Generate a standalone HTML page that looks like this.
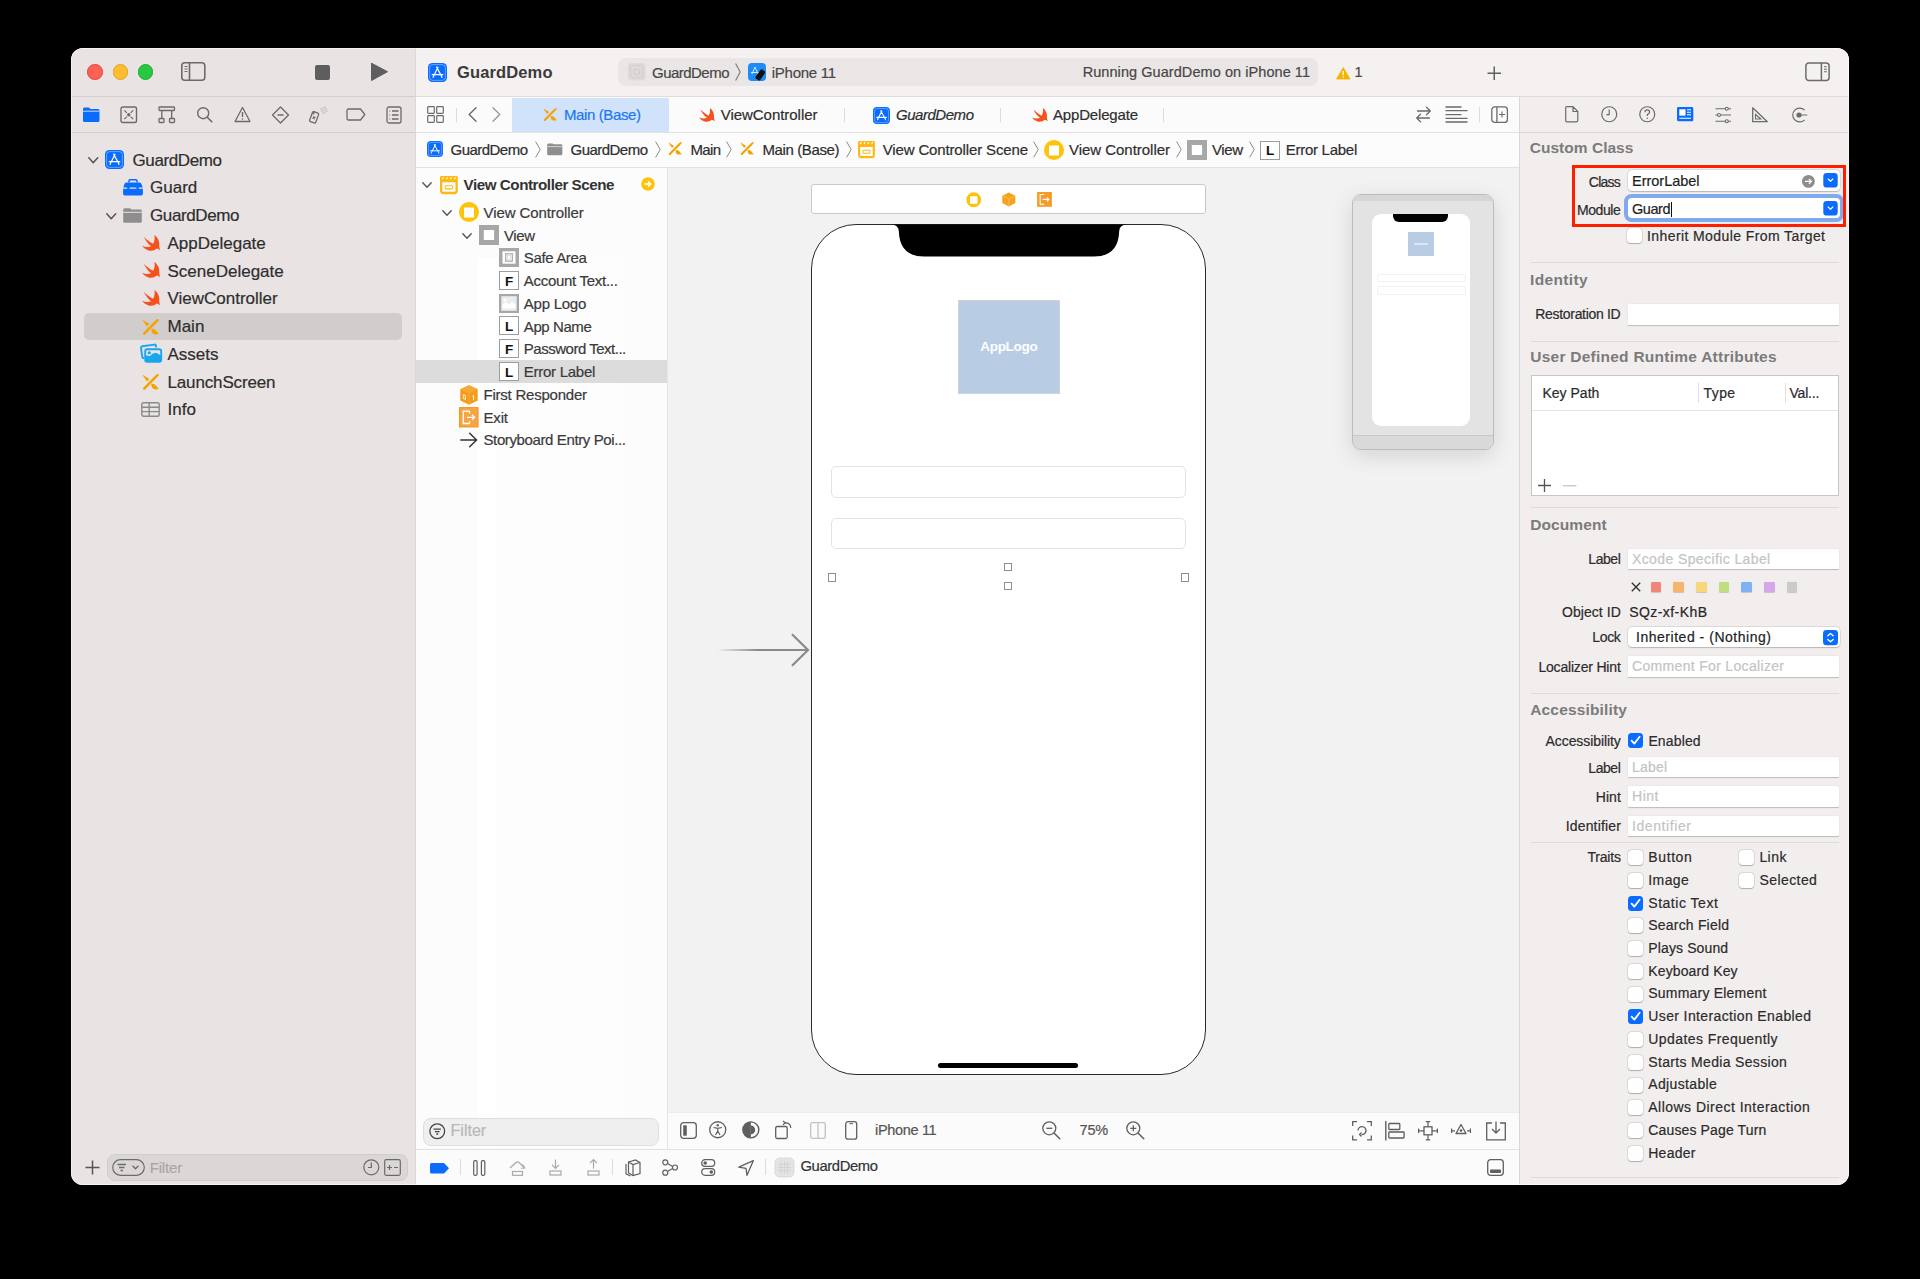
<!DOCTYPE html>
<html><head><meta charset="utf-8">
<style>
*{box-sizing:border-box;margin:0;padding:0}
html,body{width:1920px;height:1279px;background:#000;overflow:hidden;font-family:"Liberation Sans",sans-serif;color:#262626}
#win{position:absolute;left:0;top:0;width:1920px;height:1279px;clip-path:inset(48px 71px 94px 71px round 12px);background:#fbfbfb;}
.a{position:absolute}
.t{position:absolute;white-space:nowrap;line-height:1;-webkit-text-stroke:0.2px currentColor}
svg{position:absolute;overflow:visible}
</style></head><body>
<div id="win">
<!-- sec_sidebar -->
<div class="a" style="left:71px;top:48px;width:345px;height:1137px;background:#e9e3e3;"></div>
<div class="a" style="left:415px;top:48px;width:1px;height:1137px;background:#ddd8d8;"></div>
<div class="a" style="left:71px;top:96px;width:344px;height:1px;background:#d4cfcf;"></div>
<div class="a" style="left:71px;top:132px;width:344px;height:1px;background:#d4cfcf;"></div>
<div class="a" style="left:87.3px;top:64.3px;width:15.5px;height:15.5px;background:#fe5f57;border-radius:50%;border:0.5px solid #e2463f"></div>
<div class="a" style="left:112.5px;top:64.3px;width:15.5px;height:15.5px;background:#febc2e;border-radius:50%;border:0.5px solid #e1a325"></div>
<div class="a" style="left:137.7px;top:64.3px;width:15.5px;height:15.5px;background:#28c840;border-radius:50%;border:0.5px solid #1dad2b"></div>
<svg style="left:180px;top:61px" width="27" height="22" viewBox="0 0 27 22"><rect x="1.8" y="1.8" width="23" height="17.5" rx="3" fill="none" stroke="#6b6b6b" stroke-width="1.6"/><line x1="9.5" y1="2" x2="9.5" y2="19" stroke="#6b6b6b" stroke-width="1.6"/><path d="M4.5 5.5h3M4.5 8h3M4.5 10.5h3" stroke="#6b6b6b" stroke-width="1.2"/></svg>
<div class="a" style="left:314.5px;top:65px;width:15px;height:15px;background:#5e5e5e;border-radius:2px"></div>
<svg style="left:370px;top:62px" width="20" height="20" viewBox="0 0 20 20"><path d="M1.5 1.2 L17.5 9.7 L1.5 18.5 Z" fill="#5e5e5e" stroke="#5e5e5e" stroke-width="1" stroke-linejoin="round"/></svg>
<svg style="left:82px;top:106px" width="19" height="17" viewBox="0 0 19 17"><path d="M1 3 Q1 1.5 2.5 1.5 H7 L8.5 3 H16 Q17.5 3 17.5 4.5 V14.5 Q17.5 16 16 16 H2.5 Q1 16 1 14.5 Z" fill="#0a6cff"/><line x1="1" y1="5.2" x2="17.5" y2="5.2" stroke="#e8e3e3" stroke-width="0.9"/></svg>
<svg style="left:120px;top:106px" width="18" height="18" viewBox="0 0 18 18"><rect x="1" y="1" width="15.5" height="15.5" rx="1.8" fill="none" stroke="#6b6b6b" stroke-width="1.4"/><path d="M4.3 4.3 L6.9 6.9 M13.2 4.3 L10.6 6.9 M4.3 13.2 L6.9 10.6 M13.2 13.2 L10.6 10.6" stroke="#6b6b6b" stroke-width="1.2"/><circle cx="8.75" cy="8.75" r="1.7" fill="#6b6b6b"/></svg>
<svg style="left:158px;top:106px" width="18" height="18" viewBox="0 0 18 18"><rect x="1" y="1" width="15.5" height="3.5" rx="0.8" fill="none" stroke="#6b6b6b" stroke-width="1.3"/><path d="M3.8 4.5 V12.5 M13.7 4.5 V12.5" stroke="#6b6b6b" stroke-width="1.3"/><rect x="1" y="12.5" width="5" height="4" rx="0.8" fill="none" stroke="#6b6b6b" stroke-width="1.3"/><rect x="11.5" y="12.5" width="5" height="4" rx="0.8" fill="none" stroke="#6b6b6b" stroke-width="1.3"/></svg>
<svg style="left:196px;top:106px" width="18" height="18" viewBox="0 0 18 18"><circle cx="7.2" cy="7.2" r="5.5" fill="none" stroke="#6b6b6b" stroke-width="1.4"/><line x1="11.2" y1="11.2" x2="15.8" y2="15.8" stroke="#6b6b6b" stroke-width="1.6" stroke-linecap="round"/></svg>
<svg style="left:234px;top:106px" width="18" height="18" viewBox="0 0 18 18"><path d="M8.5 1.5 L16 15.5 H1 Z" fill="none" stroke="#6b6b6b" stroke-width="1.3" stroke-linejoin="round"/><path d="M8.5 6 V11" stroke="#6b6b6b" stroke-width="1.4"/><circle cx="8.5" cy="13" r="0.8" fill="#6b6b6b"/></svg>
<svg style="left:271px;top:106px" width="19" height="18" viewBox="0 0 19 18"><path d="M9.5 1 L17.5 9 L9.5 17 L1.5 9 Z" fill="none" stroke="#6b6b6b" stroke-width="1.3" stroke-linejoin="round"/><line x1="6.5" y1="9" x2="12.5" y2="9" stroke="#6b6b6b" stroke-width="1.3"/></svg>
<svg style="left:309px;top:105px" width="20" height="19" viewBox="0 0 20 19"><rect x="2" y="7" width="6.5" height="10.5" rx="1.2" transform="rotate(20 5 12)" fill="none" stroke="#6b6b6b" stroke-width="1.3"/><path d="M4.5 9.5 L5 7" stroke="#6b6b6b" stroke-width="1.3"/><path d="M4 11.5 l2.5 2.5 m0 -2.5 l-2.5 2.5" stroke="#6b6b6b" stroke-width="1" transform="rotate(20 5 12)"/><g fill="#8a8a8a"><circle cx="12" cy="4" r="0.6"/><circle cx="14" cy="3" r="0.6"/><circle cx="16" cy="2" r="0.6"/><circle cx="13" cy="6" r="0.6"/><circle cx="15" cy="5" r="0.6"/><circle cx="17" cy="4" r="0.6"/><circle cx="14" cy="8" r="0.6"/><circle cx="16" cy="7" r="0.6"/><circle cx="18" cy="6" r="0.6"/></g></svg>
<svg style="left:346px;top:108px" width="20" height="13" viewBox="0 0 20 13"><path d="M2.5 1 H14.5 L18.8 6.5 L14.5 12 H2.5 Q1 12 1 10.5 V2.5 Q1 1 2.5 1 Z" fill="none" stroke="#6b6b6b" stroke-width="1.3" stroke-linejoin="round"/></svg>
<svg style="left:386px;top:106px" width="16" height="18" viewBox="0 0 16 18"><rect x="1" y="1" width="14" height="16" rx="2" fill="none" stroke="#6b6b6b" stroke-width="1.3"/><path d="M6 5 H12.5 M6 9 H12.5 M6 13 H12.5" stroke="#6b6b6b" stroke-width="1.3"/><path d="M3.3 5 H4.3 M3.3 9 H4.3 M3.3 13 H4.3" stroke="#6b6b6b" stroke-width="1"/></svg>
<div class="a" style="left:84px;top:313px;width:318px;height:27px;background:#d2cdcd;border-radius:5px"></div>
<svg style="left:88.4px;top:157px" width="10.5" height="6.5" viewBox="0 0 10.5 6.5"><path d="M0.8 0.8 L5.25 5.7 L9.7 0.8" fill="none" stroke="#555" stroke-width="1.5" stroke-linecap="round" stroke-linejoin="round"/></svg>
<svg style="left:105.3px;top:149.7px" width="19" height="19" viewBox="0 0 19 19"><rect x="0" y="0" width="19" height="19" rx="4.5" fill="#0a6cff"/><rect x="1.6" y="1.6" width="15.8" height="15.8" rx="3.2" fill="none" stroke="#8fbcff" stroke-width="0.7"/><path d="M10 4.3 L5.4 13.4 M9.4 5.6 L13.7 13.4 M4.2 11.6 H14.9 M8.6 4.1 L9.4 5.6" stroke="#fff" stroke-width="1.15" stroke-linecap="round" fill="none"/><circle cx="5.2" cy="14.2" r="0.7" fill="#fff"/><circle cx="13.9" cy="14.2" r="0.7" fill="#fff"/></svg>
<div class="t" style="left:132.50px;top:151.71px;font-size:17px;color:#2e2e2e;letter-spacing:-0.387px;">GuardDemo</div>
<svg style="left:122.8px;top:179px" width="20" height="17" viewBox="0 0 20 17"><path d="M6 3.5 V1.8 Q6 0.8 7 0.8 H13 Q14 0.8 14 1.8 V3.5" fill="none" stroke="#0a6cff" stroke-width="1.5"/><path d="M1.3 5.5 Q1.8 3.4 3.5 3.4 H16.5 Q18.2 3.4 18.7 5.5 L19.7 8.6 H0.3 Z" fill="#0a6cff"/><path d="M0.1 9.8 H19.9 V14.8 Q19.9 16.6 18.1 16.6 H1.9 Q0.1 16.6 0.1 14.8 Z" fill="#0a6cff"/><rect x="4.2" y="7.6" width="2.4" height="3" rx="0.6" fill="#0a6cff"/><rect x="13.4" y="7.6" width="2.4" height="3" rx="0.6" fill="#0a6cff"/></svg>
<div class="t" style="left:150.00px;top:179.46px;font-size:17px;color:#2e2e2e;">Guard</div>
<svg style="left:106px;top:212.5px" width="10.5" height="6.5" viewBox="0 0 10.5 6.5"><path d="M0.8 0.8 L5.25 5.7 L9.7 0.8" fill="none" stroke="#555" stroke-width="1.5" stroke-linecap="round" stroke-linejoin="round"/></svg>
<svg style="left:123px;top:208px" width="19" height="15" viewBox="0 0 19 15"><path d="M0.2 2 Q0.2 0.3 1.8 0.3 H6.8 L8.3 1.4 H17.4 Q18.8 1.4 18.8 2.8 V13.4 Q18.8 14.8 17.4 14.8 H1.6 Q0.2 14.8 0.2 13.4 Z" fill="#8e8e8e"/><line x1="0.2" y1="4.3" x2="18.8" y2="4.3" stroke="#e8e3e3" stroke-width="1"/></svg>
<div class="t" style="left:150.00px;top:207.21px;font-size:17px;color:#2e2e2e;letter-spacing:-0.387px;">GuardDemo</div>
<svg style="left:141.7px;top:234.65px" width="18.0" height="17.0" viewBox="0 0 18 17"><path d="M12.5 0C16 2.5 17.8 6.5 17.2 11L17.9 15.4C16.8 14.2 15.6 13.6 14.6 13.5C12.5 15.6 9.5 16.2 6.5 15.4C3.8 14.6 1.5 12.8 0 10.8C2.8 12.2 6.2 12.4 9.2 11.3C6.2 9 3.5 5.5 1.7 1.7C4.6 4.6 8 7.4 11.2 8.8C12.6 6 13 3 12.5 0Z" fill="#f6511d"/></svg>
<div class="t" style="left:167.50px;top:234.96px;font-size:17px;color:#2e2e2e;">AppDelegate</div>
<svg style="left:141.7px;top:262.40000000000003px" width="18.0" height="17.0" viewBox="0 0 18 17"><path d="M12.5 0C16 2.5 17.8 6.5 17.2 11L17.9 15.4C16.8 14.2 15.6 13.6 14.6 13.5C12.5 15.6 9.5 16.2 6.5 15.4C3.8 14.6 1.5 12.8 0 10.8C2.8 12.2 6.2 12.4 9.2 11.3C6.2 9 3.5 5.5 1.7 1.7C4.6 4.6 8 7.4 11.2 8.8C12.6 6 13 3 12.5 0Z" fill="#f6511d"/></svg>
<div class="t" style="left:167.50px;top:262.71px;font-size:17px;color:#2e2e2e;">SceneDelegate</div>
<svg style="left:141.7px;top:290.15000000000003px" width="18.0" height="17.0" viewBox="0 0 18 17"><path d="M12.5 0C16 2.5 17.8 6.5 17.2 11L17.9 15.4C16.8 14.2 15.6 13.6 14.6 13.5C12.5 15.6 9.5 16.2 6.5 15.4C3.8 14.6 1.5 12.8 0 10.8C2.8 12.2 6.2 12.4 9.2 11.3C6.2 9 3.5 5.5 1.7 1.7C4.6 4.6 8 7.4 11.2 8.8C12.6 6 13 3 12.5 0Z" fill="#f6511d"/></svg>
<div class="t" style="left:167.50px;top:290.46px;font-size:17px;color:#2e2e2e;">ViewController</div>
<svg style="left:142px;top:318.6px" width="17.0" height="16.0" viewBox="0 0 17 16"><path d="M2.2 14.6 L14.2 2.4" stroke="#f5a300" stroke-width="2.6" stroke-linecap="round"/><circle cx="15.6" cy="1.3" r="1.2" fill="#f5a300"/><path d="M0.2 0.4 L7.4 4.9 L4.9 7.4 Z" fill="#f5a300"/><path d="M9.2 10.0 Q11.6 9.3 13.4 10.9 Q14.8 12.4 16.8 14.8 Q13.6 16.0 11.2 14.8 Q9.2 13.6 9.2 10.0Z" fill="#f5a300"/></svg>
<div class="t" style="left:167.50px;top:318.21px;font-size:17px;color:#2e2e2e;">Main</div>
<svg style="left:139.7px;top:344.35px" width="22" height="19" viewBox="0 0 22 19"><path d="M16 3.5 V1.8 Q15.8 0.4 14.4 0.6 L2.2 2.2 Q0.8 2.5 1 3.9 L2.3 13 Q2.5 14.3 4 14.2" fill="none" stroke="#18a6f0" stroke-width="1.9"/><rect x="5.2" y="5.3" width="16" height="12.4" rx="2" fill="none" stroke="#18a6f0" stroke-width="1.9"/><path d="M5.2 15 L5.2 12.5 Q7.3 10.8 9.6 12.2 Q12.5 9.2 15.8 8.8 Q18.6 9.6 21.2 11.7 V15.5 Q21.2 17.7 19.2 17.7 H7.2 Q5.2 17.7 5.2 15.5Z" fill="#18a6f0"/><ellipse cx="9.3" cy="8.7" rx="1.7" ry="1.5" fill="#18a6f0"/></svg>
<div class="t" style="left:167.50px;top:345.96px;font-size:17px;color:#2e2e2e;">Assets</div>
<svg style="left:142px;top:374.1px" width="17.0" height="16.0" viewBox="0 0 17 16"><path d="M2.2 14.6 L14.2 2.4" stroke="#f5a300" stroke-width="2.6" stroke-linecap="round"/><circle cx="15.6" cy="1.3" r="1.2" fill="#f5a300"/><path d="M0.2 0.4 L7.4 4.9 L4.9 7.4 Z" fill="#f5a300"/><path d="M9.2 10.0 Q11.6 9.3 13.4 10.9 Q14.8 12.4 16.8 14.8 Q13.6 16.0 11.2 14.8 Q9.2 13.6 9.2 10.0Z" fill="#f5a300"/></svg>
<div class="t" style="left:167.50px;top:373.71px;font-size:17px;color:#2e2e2e;letter-spacing:-0.149px;">LaunchScreen</div>
<svg style="left:140.5px;top:401.85px" width="19" height="15" viewBox="0 0 19 15"><rect x="0.8" y="0.8" width="17.4" height="13.4" rx="1.8" fill="none" stroke="#8a8a8a" stroke-width="1.4"/><path d="M0.8 5.2 H18.2 M0.8 9.6 H18.2 M8.2 0.8 V14.2" stroke="#8a8a8a" stroke-width="1.4"/></svg>
<div class="t" style="left:167.50px;top:401.46px;font-size:17px;color:#2e2e2e;">Info</div>
<svg style="left:85px;top:1160px" width="15" height="15" viewBox="0 0 15 15"><path d="M7.5 0.5 V14.5 M0.5 7.5 H14.5" stroke="#555" stroke-width="1.5"/></svg>
<div class="a" style="left:106.5px;top:1153.5px;width:301.5px;height:27.5px;background:#dcd7d7;border-radius:8px;border:1px solid #d2cdcd"></div>
<svg style="left:112px;top:1159px" width="33" height="17" viewBox="0 0 33 17"><rect x="0.7" y="0.7" width="31.6" height="15.6" rx="7.8" fill="none" stroke="#6b6b6b" stroke-width="1.2"/><path d="M5.5 5.5 H14 M7 8.5 H12.5 M8.5 11.5 H11" stroke="#6b6b6b" stroke-width="1.3"/><path d="M20.5 6.8 L23.5 9.8 L26.5 6.8" fill="none" stroke="#6b6b6b" stroke-width="1.3"/></svg>
<div class="t" style="left:149.70px;top:1159.60px;font-size:15px;color:#aaa6a6;letter-spacing:-0.167px;">Filter</div>
<svg style="left:363px;top:1159px" width="17" height="17" viewBox="0 0 17 17"><circle cx="8.3" cy="8.3" r="7.5" fill="none" stroke="#6b6b6b" stroke-width="1.2"/><path d="M8.3 3.5 V8.5 H5" fill="none" stroke="#6b6b6b" stroke-width="1.2"/></svg>
<svg style="left:384px;top:1159px" width="17" height="17" viewBox="0 0 17 17"><rect x="0.7" y="0.7" width="15.6" height="15.6" rx="1.5" fill="none" stroke="#6b6b6b" stroke-width="1.2"/><path d="M3 8.5 H8 M5.5 6 V11 M10 8.5 H14" stroke="#6b6b6b" stroke-width="1.2"/></svg>
<!-- sec_center -->
<div class="a" style="left:416px;top:48px;width:1433px;height:48px;background:#f6f1f1;"></div>
<div class="a" style="left:416px;top:96px;width:1433px;height:1px;background:#e0dcdc;"></div>
<svg style="left:428px;top:63px" width="19" height="19" viewBox="0 0 19 19"><rect x="0" y="0" width="19" height="19" rx="4.5" fill="#0a6cff"/><rect x="1.6" y="1.6" width="15.8" height="15.8" rx="3.2" fill="none" stroke="#8fbcff" stroke-width="0.7"/><path d="M10 4.3 L5.4 13.4 M9.4 5.6 L13.7 13.4 M4.2 11.6 H14.9 M8.6 4.1 L9.4 5.6" stroke="#fff" stroke-width="1.15" stroke-linecap="round" fill="none"/><circle cx="5.2" cy="14.2" r="0.7" fill="#fff"/><circle cx="13.9" cy="14.2" r="0.7" fill="#fff"/></svg>
<div class="t" style="left:457.00px;top:64.13px;font-size:16.5px;color:#3a3a3a;font-weight:700;-webkit-text-stroke:0;letter-spacing:0.133px;">GuardDemo</div>
<div class="a" style="left:618px;top:58.3px;width:700px;height:27.5px;background:#ebe6e6;border-radius:7px"></div>
<svg style="left:627.5px;top:63px" width="17.5" height="17.5" viewBox="0 0 17.5 17.5"><rect x="0" y="0" width="17.5" height="17.5" rx="4" fill="#dedada"/><circle cx="8.75" cy="8.75" r="3" fill="none" stroke="#c9c9c9" stroke-width="0.8"/><rect x="2.5" y="2.5" width="12.5" height="12.5" rx="2.5" fill="none" stroke="#d0cccc" stroke-width="0.8"/></svg>
<div class="t" style="left:652.00px;top:64.50px;font-size:15px;color:#474747;letter-spacing:-0.526px;">GuardDemo</div>
<svg style="left:735px;top:63px" width="6" height="18" viewBox="0 0 6 18"><path d="M0.6 0.6 L5.2 9.0 L0.6 17.4" fill="none" stroke="#777" stroke-width="1.1" stroke-linejoin="round"/></svg>
<svg style="left:747.5px;top:63px" width="18" height="18" viewBox="0 0 18 18"><rect x="0" y="0" width="18" height="18" rx="4" fill="#1d8cf8"/><path d="M7 4 L4 11 M7 4 L10 11 M3 9.5 H11" stroke="#cfe6ff" stroke-width="1"/><rect x="9.6" y="6.4" width="5.5" height="11" rx="1.2" transform="rotate(35 12.3 11.9)" fill="#111"/></svg>
<div class="t" style="left:771.75px;top:64.50px;font-size:15px;color:#474747;letter-spacing:-0.268px;">iPhone 11</div>
<div class="t" style="left:1082.70px;top:64.83px;font-size:14.5px;color:#474747;letter-spacing:0.064px;">Running GuardDemo on iPhone 11</div>
<svg style="left:1336px;top:66.5px" width="14.5" height="12.5" viewBox="0 0 14.5 12.5"><path d="M7.25 0.5 L14 12 H0.5 Z" fill="#f5b400" stroke="#f5b400" stroke-width="0.8" stroke-linejoin="round"/><path d="M7.25 4 V8" stroke="#fff" stroke-width="1.4"/><circle cx="7.25" cy="10" r="0.75" fill="#fff"/></svg>
<div class="t" style="left:1354.50px;top:65.03px;font-size:14.5px;color:#474747;">1</div>
<svg style="left:1486.5px;top:65.8px" width="14.5" height="14.5" viewBox="0 0 14.5 14.5"><path d="M7.25 0.5 V14 M0.5 7.25 H14" stroke="#5f5f5f" stroke-width="1.5"/></svg>
<svg style="left:1805px;top:61.5px" width="26" height="20" viewBox="0 0 26 20"><rect x="0.9" y="0.9" width="23.2" height="17.6" rx="3" fill="none" stroke="#6b6b6b" stroke-width="1.5"/><line x1="16.4" y1="1" x2="16.4" y2="18.5" stroke="#6b6b6b" stroke-width="1.5"/><path d="M19 4.8h2.8M19 7.3h2.8M19 9.8h2.8" stroke="#6b6b6b" stroke-width="1.1"/></svg>
<div class="a" style="left:416px;top:97px;width:1103px;height:35px;background:#fbfbfb;"></div>
<div class="a" style="left:416px;top:131.5px;width:1103px;height:1px;background:#e2e2e2;"></div>
<svg style="left:427px;top:106px" width="17" height="17" viewBox="0 0 17 17"><rect x="0.7" y="0.7" width="6.6" height="6.6" rx="0.8" fill="none" stroke="#6b6b6b" stroke-width="1.2"/><rect x="9.7" y="0.7" width="6.6" height="6.6" rx="0.8" fill="none" stroke="#6b6b6b" stroke-width="1.2"/><rect x="0.7" y="9.7" width="6.6" height="6.6" rx="0.8" fill="none" stroke="#6b6b6b" stroke-width="1.2"/><rect x="9.7" y="9.7" width="6.6" height="6.6" rx="0.8" fill="none" stroke="#6b6b6b" stroke-width="1.2"/></svg>
<div class="a" style="left:455.5px;top:107.5px;width:1px;height:14px;background:#dcdcdc;"></div>
<svg style="left:467.5px;top:107px" width="9" height="15" viewBox="0 0 9 15"><path d="M8 0.8 L1.2 7.5 L8 14.2" fill="none" stroke="#6b6b6b" stroke-width="1.4" stroke-linecap="round" stroke-linejoin="round"/></svg>
<svg style="left:492px;top:107px" width="9" height="15" viewBox="0 0 9 15"><path d="M1 0.8 L7.8 7.5 L1 14.2" fill="none" stroke="#9a9a9a" stroke-width="1.4" stroke-linecap="round" stroke-linejoin="round"/></svg>
<div class="a" style="left:512px;top:97.5px;width:157px;height:34px;background:#d1e3fb;"></div>
<svg style="left:542.5px;top:107.5px" width="13.94" height="13.12" viewBox="0 0 17 16"><path d="M2.2 14.6 L14.2 2.4" stroke="#f5a300" stroke-width="2.6" stroke-linecap="round"/><circle cx="15.6" cy="1.3" r="1.2" fill="#f5a300"/><path d="M0.2 0.4 L7.4 4.9 L4.9 7.4 Z" fill="#f5a300"/><path d="M9.2 10.0 Q11.6 9.3 13.4 10.9 Q14.8 12.4 16.8 14.8 Q13.6 16.0 11.2 14.8 Q9.2 13.6 9.2 10.0Z" fill="#f5a300"/></svg>
<div class="t" style="left:564.00px;top:107.40px;font-size:15px;color:#1877f2;letter-spacing:-0.386px;">Main (Base)</div>
<svg style="left:699px;top:107.5px" width="15.66" height="14.79" viewBox="0 0 18 17"><path d="M12.5 0C16 2.5 17.8 6.5 17.2 11L17.9 15.4C16.8 14.2 15.6 13.6 14.6 13.5C12.5 15.6 9.5 16.2 6.5 15.4C3.8 14.6 1.5 12.8 0 10.8C2.8 12.2 6.2 12.4 9.2 11.3C6.2 9 3.5 5.5 1.7 1.7C4.6 4.6 8 7.4 11.2 8.8C12.6 6 13 3 12.5 0Z" fill="#f6511d"/></svg>
<div class="t" style="left:720.75px;top:107.40px;font-size:15px;color:#2e2e2e;letter-spacing:-0.040px;">ViewController</div>
<div class="a" style="left:843.5px;top:107.5px;width:1px;height:14px;background:#dcdcdc;"></div>
<svg style="left:873px;top:106.5px" width="17" height="17" viewBox="0 0 19 19"><rect x="0" y="0" width="19" height="19" rx="4.5" fill="#0a6cff"/><rect x="1.6" y="1.6" width="15.8" height="15.8" rx="3.2" fill="none" stroke="#8fbcff" stroke-width="0.7"/><path d="M10 4.3 L5.4 13.4 M9.4 5.6 L13.7 13.4 M4.2 11.6 H14.9 M8.6 4.1 L9.4 5.6" stroke="#fff" stroke-width="1.15" stroke-linecap="round" fill="none"/><circle cx="5.2" cy="14.2" r="0.7" fill="#fff"/><circle cx="13.9" cy="14.2" r="0.7" fill="#fff"/></svg>
<div class="t" style="left:896.00px;top:107.40px;font-size:15px;color:#2e2e2e;font-style:italic;letter-spacing:-0.463px;">GuardDemo</div>
<div class="a" style="left:1000px;top:107.5px;width:1px;height:14px;background:#dcdcdc;"></div>
<svg style="left:1031.5px;top:107.5px" width="15.66" height="14.79" viewBox="0 0 18 17"><path d="M12.5 0C16 2.5 17.8 6.5 17.2 11L17.9 15.4C16.8 14.2 15.6 13.6 14.6 13.5C12.5 15.6 9.5 16.2 6.5 15.4C3.8 14.6 1.5 12.8 0 10.8C2.8 12.2 6.2 12.4 9.2 11.3C6.2 9 3.5 5.5 1.7 1.7C4.6 4.6 8 7.4 11.2 8.8C12.6 6 13 3 12.5 0Z" fill="#f6511d"/></svg>
<div class="t" style="left:1053.00px;top:107.40px;font-size:15px;color:#2e2e2e;letter-spacing:-0.174px;">AppDelegate</div>
<div class="a" style="left:1163px;top:107.5px;width:1px;height:14px;background:#dcdcdc;"></div>
<svg style="left:1415px;top:106px" width="17" height="17" viewBox="0 0 17 17"><path d="M2.5 5 H15 M11.5 1.3 L15.3 5 L11.5 8.7 M14.5 12 H2 M5.5 8.3 L1.7 12 L5.5 15.7" fill="none" stroke="#6b6b6b" stroke-width="1.3" stroke-linecap="round" stroke-linejoin="round"/></svg>
<svg style="left:1444.5px;top:106px" width="23" height="17" viewBox="0 0 23 17"><path d="M0.5 1 H16.5 M0.5 4.6 H22.5 M0.5 8.6 H16.5 M0.5 12.3 H22.5 M0.5 16 H22.5" stroke="#6b6b6b" stroke-width="1.3"/></svg>
<div class="a" style="left:1479px;top:107px;width:1px;height:14.5px;background:#dcdcdc;"></div>
<svg style="left:1491px;top:106px" width="17" height="17" viewBox="0 0 17 17"><rect x="0.8" y="0.8" width="15.6" height="15.6" rx="3" fill="none" stroke="#6b6b6b" stroke-width="1.3"/><path d="M5.9 1 V16.4" stroke="#6b6b6b" stroke-width="1.3"/><path d="M11 5.5 V11.5 M8 8.5 H14" stroke="#6b6b6b" stroke-width="1.1"/></svg>
<div class="a" style="left:416px;top:132.5px;width:1103px;height:35px;background:#fcfcfc;"></div>
<div class="a" style="left:416px;top:167px;width:1103px;height:1px;background:#e2e2e2;"></div>
<svg style="left:427px;top:141px" width="16" height="16" viewBox="0 0 19 19"><rect x="0" y="0" width="19" height="19" rx="4.5" fill="#0a6cff"/><rect x="1.6" y="1.6" width="15.8" height="15.8" rx="3.2" fill="none" stroke="#8fbcff" stroke-width="0.7"/><path d="M10 4.3 L5.4 13.4 M9.4 5.6 L13.7 13.4 M4.2 11.6 H14.9 M8.6 4.1 L9.4 5.6" stroke="#fff" stroke-width="1.15" stroke-linecap="round" fill="none"/><circle cx="5.2" cy="14.2" r="0.7" fill="#fff"/><circle cx="13.9" cy="14.2" r="0.7" fill="#fff"/></svg>
<div class="t" style="left:450.50px;top:141.50px;font-size:15px;color:#2e2e2e;letter-spacing:-0.526px;">GuardDemo</div>
<svg style="left:535px;top:140.5px" width="6" height="17" viewBox="0 0 6 17"><path d="M0.6 0.6 L5.2 8.5 L0.6 16.4" fill="none" stroke="#8a8a8a" stroke-width="1" stroke-linejoin="round"/></svg>
<svg style="left:547px;top:142.5px" width="15.5" height="12.5" viewBox="0 0 19 15"><path d="M0.2 2 Q0.2 0.3 1.8 0.3 H6.8 L8.3 1.4 H17.4 Q18.8 1.4 18.8 2.8 V13.4 Q18.8 14.8 17.4 14.8 H1.6 Q0.2 14.8 0.2 13.4 Z" fill="#8e8e8e"/><line x1="0.2" y1="4.3" x2="18.8" y2="4.3" stroke="#e8e3e3" stroke-width="1"/></svg>
<div class="t" style="left:570.50px;top:141.50px;font-size:15px;color:#2e2e2e;letter-spacing:-0.526px;">GuardDemo</div>
<svg style="left:654.5px;top:140.5px" width="6" height="17" viewBox="0 0 6 17"><path d="M0.6 0.6 L5.2 8.5 L0.6 16.4" fill="none" stroke="#8a8a8a" stroke-width="1" stroke-linejoin="round"/></svg>
<svg style="left:667.5px;top:141.5px" width="13.94" height="13.12" viewBox="0 0 17 16"><path d="M2.2 14.6 L14.2 2.4" stroke="#f5a300" stroke-width="2.6" stroke-linecap="round"/><circle cx="15.6" cy="1.3" r="1.2" fill="#f5a300"/><path d="M0.2 0.4 L7.4 4.9 L4.9 7.4 Z" fill="#f5a300"/><path d="M9.2 10.0 Q11.6 9.3 13.4 10.9 Q14.8 12.4 16.8 14.8 Q13.6 16.0 11.2 14.8 Q9.2 13.6 9.2 10.0Z" fill="#f5a300"/></svg>
<div class="t" style="left:690.50px;top:141.50px;font-size:15px;color:#2e2e2e;letter-spacing:-0.671px;">Main</div>
<svg style="left:726px;top:140.5px" width="6" height="17" viewBox="0 0 6 17"><path d="M0.6 0.6 L5.2 8.5 L0.6 16.4" fill="none" stroke="#8a8a8a" stroke-width="1" stroke-linejoin="round"/></svg>
<svg style="left:740px;top:141.5px" width="13.94" height="13.12" viewBox="0 0 17 16"><path d="M2.2 14.6 L14.2 2.4" stroke="#f5a300" stroke-width="2.6" stroke-linecap="round"/><circle cx="15.6" cy="1.3" r="1.2" fill="#f5a300"/><path d="M0.2 0.4 L7.4 4.9 L4.9 7.4 Z" fill="#f5a300"/><path d="M9.2 10.0 Q11.6 9.3 13.4 10.9 Q14.8 12.4 16.8 14.8 Q13.6 16.0 11.2 14.8 Q9.2 13.6 9.2 10.0Z" fill="#f5a300"/></svg>
<div class="t" style="left:762.50px;top:141.50px;font-size:15px;color:#2e2e2e;letter-spacing:-0.386px;">Main (Base)</div>
<svg style="left:846px;top:140.5px" width="6" height="17" viewBox="0 0 6 17"><path d="M0.6 0.6 L5.2 8.5 L0.6 16.4" fill="none" stroke="#8a8a8a" stroke-width="1" stroke-linejoin="round"/></svg>
<svg style="left:857.5px;top:141px" width="16.91" height="17.29" viewBox="0 0 17.8 18.2"><path d="M0 1.5 Q0 0 1.5 0 H16.3 Q17.8 0 17.8 1.5 V14.5 Q17.8 18.2 14.2 18.2 H3.6 Q0 18.2 0 14.5Z" fill="#fdb813"/><path d="M2.2 3.2 L3.6 1.2 M6.2 3.2 L7.6 1.2 M10.2 3.2 L11.6 1.2 M14.2 3.2 L15.6 1.2" stroke="#fff" stroke-width="1.1"/><rect x="2.3" y="6.3" width="13.2" height="9.4" fill="#fff"/><rect x="5.2" y="9.7" width="7.4" height="3.2" rx="0.9" fill="none" stroke="#fdb813" stroke-width="1.1"/></svg>
<div class="t" style="left:882.70px;top:141.50px;font-size:15px;color:#2e2e2e;letter-spacing:-0.142px;">View Controller Scene</div>
<svg style="left:1033px;top:140.5px" width="6" height="17" viewBox="0 0 6 17"><path d="M0.6 0.6 L5.2 8.5 L0.6 16.4" fill="none" stroke="#8a8a8a" stroke-width="1" stroke-linejoin="round"/></svg>
<svg style="left:1044px;top:140px" width="20" height="20" viewBox="0 0 20 20"><circle cx="10" cy="10" r="10" fill="#fdc30a"/><rect x="5" y="5.5" width="10" height="10" rx="0.5" fill="#fff"/></svg>
<div class="t" style="left:1069.00px;top:141.50px;font-size:15px;color:#2e2e2e;letter-spacing:-0.031px;">View Controller</div>
<svg style="left:1176px;top:140.5px" width="6" height="17" viewBox="0 0 6 17"><path d="M0.6 0.6 L5.2 8.5 L0.6 16.4" fill="none" stroke="#8a8a8a" stroke-width="1" stroke-linejoin="round"/></svg>
<svg style="left:1186.7px;top:140px" width="20" height="20" viewBox="0 0 20 20"><rect x="0" y="0" width="20" height="20" fill="#a7a7a7"/><rect x="4.8" y="5" width="10.3" height="10" fill="#fff"/></svg>
<div class="t" style="left:1212.00px;top:141.50px;font-size:15px;color:#2e2e2e;letter-spacing:-0.414px;">View</div>
<svg style="left:1249px;top:140.5px" width="6" height="17" viewBox="0 0 6 17"><path d="M0.6 0.6 L5.2 8.5 L0.6 16.4" fill="none" stroke="#8a8a8a" stroke-width="1" stroke-linejoin="round"/></svg>
<div class="a" style="left:1260px;top:140.5px;width:20px;height:19px;background:#fff;border:1.3px solid #9d9d9d"></div>
<div class="t" style="left:1265.88px;top:144.07px;font-size:13.5px;color:#111;font-weight:700;-webkit-text-stroke:0;">L</div>
<div class="t" style="left:1285.70px;top:141.50px;font-size:15px;color:#2e2e2e;letter-spacing:-0.261px;">Error Label</div>
<div class="a" style="left:416px;top:168px;width:252px;height:980px;background:#fcfcfc;"></div>
<div class="a" style="left:667px;top:168px;width:1px;height:981px;background:#e4e4e4;"></div>
<div class="a" style="left:477px;top:258px;width:18px;height:890px;background:#ffffff;"></div>
<div class="a" style="left:495px;top:258px;width:127px;height:890px;background:#fdfdfd;"></div>
<svg style="left:421.7px;top:181.5px" width="10" height="6" viewBox="0 0 10 6"><path d="M0.8 0.8 L5.0 5.2 L9.2 0.8" fill="none" stroke="#555" stroke-width="1.4" stroke-linecap="round" stroke-linejoin="round"/></svg>
<svg style="left:440px;top:175.6px" width="17.8" height="18.2" viewBox="0 0 17.8 18.2"><path d="M0 1.5 Q0 0 1.5 0 H16.3 Q17.8 0 17.8 1.5 V14.5 Q17.8 18.2 14.2 18.2 H3.6 Q0 18.2 0 14.5Z" fill="#fdb813"/><path d="M2.2 3.2 L3.6 1.2 M6.2 3.2 L7.6 1.2 M10.2 3.2 L11.6 1.2 M14.2 3.2 L15.6 1.2" stroke="#fff" stroke-width="1.1"/><rect x="2.3" y="6.3" width="13.2" height="9.4" fill="#fff"/><rect x="5.2" y="9.7" width="7.4" height="3.2" rx="0.9" fill="none" stroke="#fdb813" stroke-width="1.1"/></svg>
<div class="t" style="left:463.50px;top:177.13px;font-size:15.2px;color:#333;font-weight:700;-webkit-text-stroke:0;letter-spacing:-0.451px;">View Controller Scene</div>
<svg style="left:641px;top:177px" width="14" height="14" viewBox="0 0 14 14"><circle cx="7" cy="7" r="6.8" fill="#fdc30a"/><path d="M3.5 7 H9.5 M7 4.3 L9.8 7 L7 9.7" fill="none" stroke="#fff" stroke-width="1.5"/></svg>
<svg style="left:441.5px;top:210.3px" width="10" height="6" viewBox="0 0 10 6"><path d="M0.8 0.8 L5.0 5.2 L9.2 0.8" fill="none" stroke="#555" stroke-width="1.4" stroke-linecap="round" stroke-linejoin="round"/></svg>
<svg style="left:459px;top:202px" width="20" height="20" viewBox="0 0 20 20"><circle cx="10" cy="10" r="10" fill="#fdc30a"/><rect x="5" y="5.5" width="10" height="10" rx="0.5" fill="#fff"/></svg>
<div class="t" style="left:483.50px;top:204.80px;font-size:15px;color:#3a3a3a;letter-spacing:-0.088px;">View Controller</div>
<svg style="left:461.6px;top:232.5px" width="10" height="6" viewBox="0 0 10 6"><path d="M0.8 0.8 L5.0 5.2 L9.2 0.8" fill="none" stroke="#555" stroke-width="1.4" stroke-linecap="round" stroke-linejoin="round"/></svg>
<svg style="left:479px;top:225px" width="20" height="20" viewBox="0 0 20 20"><rect x="0" y="0" width="20" height="20" fill="#a7a7a7"/><rect x="4.8" y="5" width="10.3" height="10" fill="#fff"/></svg>
<div class="t" style="left:504.00px;top:227.55px;font-size:15px;color:#3a3a3a;letter-spacing:-0.414px;">View</div>
<div class="a" style="left:416px;top:359.5px;width:251px;height:23px;background:#dcdcdc;"></div>
<svg style="left:499px;top:248.3px" width="20" height="19" viewBox="0 0 20 19"><rect x="0" y="0" width="20" height="19" fill="#a7a7a7"/><rect x="3.5" y="3.3" width="13" height="12.4" fill="#fff"/><rect x="6.7" y="5.8" width="6.6" height="7.4" fill="none" stroke="#a7a7a7" stroke-width="1.2"/><rect x="8.5" y="7.6" width="3" height="3.8" fill="#fff" stroke="#c9c9c9" stroke-width="0.6"/></svg>
<div class="t" style="left:523.80px;top:250.30px;font-size:15px;color:#3a3a3a;letter-spacing:-0.360px;">Safe Area</div>
<div class="a" style="left:499px;top:271.2px;width:20px;height:19px;background:#fff;border:1.3px solid #9d9d9d"></div>
<div class="t" style="left:504.88px;top:275.07px;font-size:13.5px;color:#111;font-weight:700;-webkit-text-stroke:0;">F</div>
<div class="t" style="left:523.80px;top:273.05px;font-size:15px;color:#3a3a3a;letter-spacing:-0.293px;">Account Text...</div>
<svg style="left:499px;top:294.2px" width="20" height="19" viewBox="0 0 20 19"><rect x="0" y="0" width="20" height="19" fill="#a7a7a7"/><rect x="2.3" y="2.2" width="15.4" height="14.6" fill="#ececec"/><path d="M3.2 14.5 V11 L6.8 8 L10 10.5 L13 7.8 L16.8 11 V14.5 Z" fill="#fff"/><circle cx="6" cy="6" r="1.5" fill="#fff"/></svg>
<div class="t" style="left:523.80px;top:295.80px;font-size:15px;color:#3a3a3a;letter-spacing:-0.247px;">App Logo</div>
<div class="a" style="left:499px;top:316.3px;width:20px;height:19px;background:#fff;border:1.3px solid #9d9d9d"></div>
<div class="t" style="left:504.88px;top:320.17px;font-size:13.5px;color:#111;font-weight:700;-webkit-text-stroke:0;">L</div>
<div class="t" style="left:523.80px;top:318.55px;font-size:15px;color:#3a3a3a;letter-spacing:-0.410px;">App Name</div>
<div class="a" style="left:499px;top:339.3px;width:20px;height:19px;background:#fff;border:1.3px solid #9d9d9d"></div>
<div class="t" style="left:504.88px;top:343.17px;font-size:13.5px;color:#111;font-weight:700;-webkit-text-stroke:0;">F</div>
<div class="t" style="left:523.80px;top:341.30px;font-size:15px;color:#3a3a3a;letter-spacing:-0.485px;">Password Text...</div>
<div class="a" style="left:499px;top:361.7px;width:20px;height:19px;background:#fff;border:1.3px solid #9d9d9d"></div>
<div class="t" style="left:504.88px;top:365.57px;font-size:13.5px;color:#111;font-weight:700;-webkit-text-stroke:0;">L</div>
<div class="t" style="left:523.80px;top:364.05px;font-size:15px;color:#3a3a3a;letter-spacing:-0.271px;">Error Label</div>
<svg style="left:460px;top:384.6px" width="18" height="20" viewBox="0 0 18 20"><path d="M9 0.3 L17.7 4.3 V15.5 L9 19.7 L0.3 15.5 V4.3 Z" fill="#f49c17"/><path d="M0.3 4.3 L9 8.6 L17.7 4.3 L9 0.3Z" fill="#f6a938"/><path d="M9 8.6 V19.7" stroke="#f8b75a" stroke-width="0.7"/><path d="M3.4 9.5 L5.4 10.5 V14.5 L3.4 13.5Z" fill="none" stroke="#fff" stroke-width="0.8"/><path d="M12.5 11 L13.6 10.4 V15.2" fill="none" stroke="#fff" stroke-width="1"/></svg>
<div class="t" style="left:483.50px;top:386.80px;font-size:15px;color:#3a3a3a;letter-spacing:-0.229px;">First Responder</div>
<svg style="left:459.1px;top:407px" width="19.6" height="20.5" viewBox="0 0 19.6 20.5"><rect x="0" y="0" width="19.6" height="20.5" fill="#f49b2a"/><rect x="1.2" y="1.2" width="17.2" height="18.1" fill="#f6a544"/><path d="M10.5 4.2 H4.3 V16.5 H10.5 M10.5 4.2 V6.5 M10.5 14.2 V16.5" fill="none" stroke="#fff" stroke-width="1.3"/><path d="M8 10.3 H15.5 M13 7.8 L15.6 10.3 L13 12.8" fill="none" stroke="#fff" stroke-width="1.3"/></svg>
<div class="t" style="left:483.50px;top:409.55px;font-size:15px;color:#3a3a3a;letter-spacing:-0.168px;">Exit</div>
<svg style="left:460px;top:432px" width="18" height="16" viewBox="0 0 18 16"><path d="M0.8 8 H16.5 M9.7 1.2 L16.6 8 L9.7 14.8" fill="none" stroke="#333" stroke-width="1.5" stroke-linecap="round" stroke-linejoin="round"/></svg>
<div class="t" style="left:483.50px;top:432.30px;font-size:15px;color:#3a3a3a;letter-spacing:-0.382px;">Storyboard Entry Poi...</div>
<div class="a" style="left:422.6px;top:1118.3px;width:236.8px;height:27.4px;background:#efefef;border-radius:8px;border:1px solid #dedede"></div>
<svg style="left:428.7px;top:1122.7px" width="16.5" height="16.5" viewBox="0 0 16.5 16.5"><circle cx="8.25" cy="8.25" r="7.4" fill="none" stroke="#444" stroke-width="1.3"/><path d="M4.6 6.2 H11.9 M5.9 8.6 H10.6 M7.3 11 H9.2" stroke="#444" stroke-width="1.3"/></svg>
<div class="t" style="left:450.60px;top:1123.46px;font-size:16px;color:#b8b8b8;">Filter</div>
<!-- sec_canvas -->
<div class="a" style="left:668px;top:168px;width:851px;height:944px;background:#f2f2f2;"></div>
<div class="a" style="left:810.8px;top:184px;width:395.2px;height:30px;background:#fff;border:1px solid #c9c9c9;border-radius:3px"></div>
<svg style="left:966px;top:192px" width="15.5" height="15.5" viewBox="0 0 15.5 15.5"><circle cx="7.75" cy="7.75" r="7.4" fill="#fdc30a"/><rect x="4" y="4.2" width="7.5" height="7.5" rx="0.4" fill="#fff"/></svg>
<svg style="left:1002.3px;top:191.7px" width="13.6" height="14.8" viewBox="0 0 15 16"><path d="M7.5 0.3 L14.7 4 V12 L7.5 15.7 L0.3 12 V4 Z" fill="#f7a21b"/><path d="M0.3 4 L7.5 7.7 L14.7 4 M7.5 7.7 V15.7" fill="none" stroke="#ffd08a" stroke-width="0.6"/></svg>
<svg style="left:1036.8px;top:191.8px" width="15" height="14.8" viewBox="0 0 15.5 15.5"><rect x="0" y="0" width="15.5" height="15.5" fill="#f49b2a"/><path d="M7.5 2.6 H3.2 V12.9 H7.5" fill="none" stroke="#fff" stroke-width="1.1"/><path d="M5.8 7.75 H12.3 M10.2 5.6 L12.4 7.75 L10.2 9.9" fill="none" stroke="#fff" stroke-width="1.1"/></svg>
<div class="a" style="left:811px;top:224.2px;width:394.5px;height:850.5px;background:#fff;border:1.5px solid #2a2a2a;border-radius:45px"></div>
<svg style="left:880px;top:224px" width="258" height="34" viewBox="0 0 258 34"><path d="M11 0.6 Q18.5 0.8 18.8 7 Q19.5 32.5 44 32.5 H214 Q238.5 32.5 239.2 7 Q239.5 0.8 247 0.6 V0.5 H11Z" fill="#000"/></svg>
<div class="a" style="left:957.6px;top:299.5px;width:102.4px;height:94px;background:#b8cce4;border:1.2px solid #cfd3d9"></div>
<div class="t" style="left:980.30px;top:339.57px;font-size:13.5px;color:#fff;font-weight:700;-webkit-text-stroke:0;letter-spacing:-0.305px;">AppLogo</div>
<div class="a" style="left:831.2px;top:466.3px;width:354.4px;height:32px;background:#fff;border:1px solid #e3e3e3;border-radius:5px"></div>
<div class="a" style="left:831.2px;top:517.6px;width:354.4px;height:31.7px;background:#fff;border:1px solid #e3e3e3;border-radius:5px"></div>
<div class="a" style="left:827.5px;top:573.0px;width:8.6px;height:8.6px;background:#fff;border:1.2px solid #8e8e8e"></div>
<div class="a" style="left:1003.8000000000001px;top:562.7px;width:8.6px;height:8.6px;background:#fff;border:1.2px solid #8e8e8e"></div>
<div class="a" style="left:1003.8000000000001px;top:581.5px;width:8.6px;height:8.6px;background:#fff;border:1.2px solid #8e8e8e"></div>
<div class="a" style="left:1180.5px;top:573.0px;width:8.6px;height:8.6px;background:#fff;border:1.2px solid #8e8e8e"></div>
<div class="a" style="left:938px;top:1062.5px;width:140px;height:5.6px;background:#000;border-radius:3px"></div>
<svg style="left:715px;top:633px" width="96" height="34" viewBox="0 0 96 34"><defs><linearGradient id="ga" gradientUnits="userSpaceOnUse" x1="2" y1="0" x2="93" y2="0"><stop offset="0" stop-color="#8a8a8a" stop-opacity="0"/><stop offset="0.45" stop-color="#8a8a8a" stop-opacity="1"/></linearGradient></defs><path d="M2 17 H93" stroke="url(#ga)" stroke-width="2.2"/><path d="M77 1.3 L93 17 L77 32.7" fill="none" stroke="#8a8a8a" stroke-width="2.2"/></svg>
<div class="a" style="left:1352px;top:193.6px;width:141.7px;height:256.7px;background:#e3e3e3;border:1px solid #bcbcbc;border-radius:9px;box-shadow:0 6px 22px rgba(0,0,0,0.13)"></div>
<div class="a" style="left:1353px;top:194.6px;width:139.7px;height:6px;background:#d6d6d6;border-radius:8px 8px 0 0"></div>
<div class="a" style="left:1353px;top:435px;width:139.7px;height:14.3px;background:#d9d9d9;border-radius:0 0 8px 8px;border-top:1px solid #c9c9c9"></div>
<div class="a" style="left:1371.5px;top:214px;width:98px;height:212px;background:#fff;border-radius:9px"></div>
<div class="a" style="left:1393px;top:213.5px;width:55.4px;height:8.5px;background:#000;border-radius:0 0 6px 6px"></div>
<div class="a" style="left:1408px;top:232px;width:26px;height:24px;background:#b8cce4;"></div>
<div class="a" style="left:1414px;top:243.3px;width:14px;height:1.6px;background:#dbe4f0;"></div>
<div class="a" style="left:1376.5px;top:273.6px;width:89px;height:8.4px;background:#fff;border:1px solid #f1f1f1;border-radius:2px"></div>
<div class="a" style="left:1376.5px;top:286px;width:89px;height:8.5px;background:#fff;border:1px solid #f1f1f1;border-radius:2px"></div>
<div class="a" style="left:668px;top:1112px;width:851px;height:1px;background:#ececec;"></div>
<div class="a" style="left:668px;top:1113px;width:851px;height:35px;background:#fbfbfb;"></div>
<div class="a" style="left:416px;top:1148.5px;width:1103px;height:1px;background:#e2e2e2;"></div>
<div class="a" style="left:416px;top:1149.5px;width:1103px;height:35.5px;background:#fbfbfb;"></div>
<svg style="left:680px;top:1121.5px" width="17" height="17" viewBox="0 0 17 17"><rect x="0.7" y="0.7" width="15.6" height="15.6" rx="3" fill="none" stroke="#5f5f5f" stroke-width="1.3"/><rect x="3.2" y="3.3" width="3.6" height="10.4" rx="0.6" fill="#5f5f5f"/></svg>
<svg style="left:709px;top:1121px" width="17.5" height="17.5" viewBox="0 0 17.5 17.5"><circle cx="8.75" cy="8.75" r="8" fill="none" stroke="#5f5f5f" stroke-width="1.3"/><circle cx="8.75" cy="4.3" r="1.2" fill="#5f5f5f"/><path d="M4.5 6.5 L8.75 7.4 L13 6.5 M8.75 7.4 V10 L6.5 14 M8.75 10 L11 14" fill="none" stroke="#5f5f5f" stroke-width="1.2"/></svg>
<svg style="left:741.6px;top:1121px" width="17.7" height="17.7" viewBox="0 0 17.7 17.7"><circle cx="8.85" cy="8.85" r="8" fill="none" stroke="#5f5f5f" stroke-width="1.4"/><path d="M8.85 0.85 A8 8 0 0 0 8.85 16.85Z" fill="#5f5f5f"/><path d="M8.85 4.5 A4.35 4.35 0 0 1 8.85 13.2Z" fill="#5f5f5f"/></svg>
<svg style="left:775px;top:1119.5px" width="18" height="19.5" viewBox="0 0 18 19.5"><rect x="0.7" y="6.5" width="11.5" height="12" rx="1.5" fill="none" stroke="#5f5f5f" stroke-width="1.3"/><path d="M10 2.8 Q15.5 2.5 15.8 8" fill="none" stroke="#5f5f5f" stroke-width="1.2"/><path d="M8 1 L10.3 2.8 L8 4.8" fill="none" stroke="#5f5f5f" stroke-width="1.2"/></svg>
<svg style="left:809.6px;top:1121.5px" width="16" height="17" viewBox="0 0 16 17"><rect x="0.7" y="0.7" width="14.6" height="15.6" rx="2" fill="none" stroke="#c2c2c2" stroke-width="1.3"/><path d="M8 1 V16" stroke="#c2c2c2" stroke-width="1.3"/></svg>
<svg style="left:844.6px;top:1120.5px" width="12.5" height="19" viewBox="0 0 12.5 19"><rect x="0.7" y="0.7" width="11" height="17.5" rx="2.2" fill="none" stroke="#5f5f5f" stroke-width="1.3"/><path d="M4.5 2.6 H8" stroke="#5f5f5f" stroke-width="1"/></svg>
<div class="t" style="left:875.00px;top:1122.93px;font-size:14.5px;color:#555;letter-spacing:-0.329px;">iPhone 11</div>
<svg style="left:1042px;top:1120.5px" width="19" height="19" viewBox="0 0 19 19"><circle cx="7.3" cy="7.3" r="6.5" fill="none" stroke="#5f5f5f" stroke-width="1.3"/><path d="M12 12 L17.8 17.8" stroke="#5f5f5f" stroke-width="1.5" stroke-linecap="round"/><path d="M4.3 7.3 H10.3" stroke="#5f5f5f" stroke-width="1.3"/></svg>
<div class="t" style="left:1079.50px;top:1123.33px;font-size:14.5px;color:#555;letter-spacing:-0.161px;">75%</div>
<svg style="left:1126.4px;top:1120.5px" width="19" height="19" viewBox="0 0 19 19"><circle cx="7.3" cy="7.3" r="6.5" fill="none" stroke="#5f5f5f" stroke-width="1.3"/><path d="M12 12 L17.8 17.8" stroke="#5f5f5f" stroke-width="1.5" stroke-linecap="round"/><path d="M4.3 7.3 H10.3 M7.3 4.3 V10.3" stroke="#5f5f5f" stroke-width="1.3"/></svg>
<svg style="left:1352px;top:1121px" width="20" height="19.5" viewBox="0 0 20 19.5"><path d="M0.7 5 V0.7 H5 M15 0.7 H19.3 V5 M19.3 14.5 V18.8 H15 M5 18.8 H0.7 V14.5" fill="none" stroke="#5f5f5f" stroke-width="1.3"/><path d="M6 9.5 A4 4 0 1 1 9.5 13.5" fill="none" stroke="#5f5f5f" stroke-width="1.3"/><path d="M9.5 11.5 L7.5 13.5 L9.5 15.5" fill="none" stroke="#5f5f5f" stroke-width="1.2"/></svg>
<svg style="left:1384.5px;top:1121px" width="20" height="19.5" viewBox="0 0 20 19.5"><path d="M0.8 0 V19.5" stroke="#5f5f5f" stroke-width="1.4"/><rect x="3.8" y="2.5" width="11" height="6" rx="0.8" fill="none" stroke="#5f5f5f" stroke-width="1.3"/><rect x="3.8" y="11" width="15.3" height="6" rx="0.8" fill="none" stroke="#5f5f5f" stroke-width="1.3"/></svg>
<svg style="left:1417.6px;top:1121px" width="20" height="19.5" viewBox="0 0 20 19.5"><rect x="6" y="5.8" width="8" height="8" fill="none" stroke="#5f5f5f" stroke-width="1.3"/><path d="M10 0.5 V5.8 M10 13.8 V19 M7.8 0.6 H12.2 M7.8 18.9 H12.2 M0.6 9.8 H6 M14 9.8 H19.4 M0.6 7.6 V12 M19.4 7.6 V12" stroke="#5f5f5f" stroke-width="1.2"/></svg>
<svg style="left:1450.5px;top:1121px" width="20" height="19.5" viewBox="0 0 20 19.5"><path d="M10 3.5 L15 12.5 H5 Z" fill="none" stroke="#5f5f5f" stroke-width="1.3" stroke-linejoin="round"/><circle cx="10" cy="9.6" r="1.3" fill="#5f5f5f"/><path d="M0.6 9.8 H4 M16 9.8 H19.4 M0.6 7.6 V12 M19.4 7.6 V12" stroke="#5f5f5f" stroke-width="1.2"/></svg>
<svg style="left:1485.8px;top:1121px" width="20" height="19.5" viewBox="0 0 20 19.5"><path d="M6 2 H0.7 V18.8 H19.3 V2 H14" fill="none" stroke="#5f5f5f" stroke-width="1.3"/><path d="M10 0.5 V12 M6 8 L10 12 L14 8" fill="none" stroke="#5f5f5f" stroke-width="1.3"/></svg>
<svg style="left:430px;top:1162.5px" width="19" height="10.5" viewBox="0 0 19 10.5"><path d="M1.5 0 H14 L19 5.25 L14 10.5 H1.5 Q0 10.5 0 9 V1.5 Q0 0 1.5 0Z" fill="#0a6cff"/></svg>
<div class="a" style="left:459.5px;top:1159px;width:1px;height:16px;background:#dcdcdc;"></div>
<svg style="left:473px;top:1159.5px" width="12.5" height="16" viewBox="0 0 12.5 16"><rect x="0.7" y="0.7" width="3.4" height="14.6" rx="1.2" fill="none" stroke="#5f5f5f" stroke-width="1.2"/><rect x="8.4" y="0.7" width="3.4" height="14.6" rx="1.2" fill="none" stroke="#5f5f5f" stroke-width="1.2"/></svg>
<svg style="left:508.8px;top:1159.5px" width="17" height="16" viewBox="0 0 17 16"><path d="M1 8 L7 2.5 Q8.5 1.3 10 2.5 L15.5 7.8" fill="none" stroke="#a8a8a8" stroke-width="1.2"/><path d="M13.7 4.5 L15.8 8 L12 8.3" fill="none" stroke="#a8a8a8" stroke-width="1.1"/><rect x="3.5" y="11.5" width="10" height="3.8" fill="none" stroke="#a8a8a8" stroke-width="1.2"/></svg>
<svg style="left:548.5px;top:1159px" width="13" height="17" viewBox="0 0 13 17"><path d="M6.5 0.5 V9 M3 5.8 L6.5 9.3 L10 5.8" fill="none" stroke="#a8a8a8" stroke-width="1.2"/><rect x="1" y="12" width="11" height="4" fill="none" stroke="#a8a8a8" stroke-width="1.2"/></svg>
<svg style="left:586.5px;top:1159px" width="13" height="17" viewBox="0 0 13 17"><path d="M6.5 9.5 V1 M3 4.2 L6.5 0.7 L10 4.2" fill="none" stroke="#a8a8a8" stroke-width="1.2"/><rect x="1" y="12" width="11" height="4" fill="none" stroke="#a8a8a8" stroke-width="1.2"/></svg>
<div class="a" style="left:612px;top:1159px;width:1px;height:16px;background:#dcdcdc;"></div>
<svg style="left:624.6px;top:1159px" width="15.5" height="17" viewBox="0 0 15.5 17"><path d="M3.5 3 L10.5 1 L15 3.5 V14.5 L8 16.5 L3.5 14 Z" fill="none" stroke="#5f5f5f" stroke-width="1.2"/><path d="M8 5.5 V16.5 M3.5 3 L8 5.5 L15 3.5 M1 5 V14.8 L5.5 17" fill="none" stroke="#5f5f5f" stroke-width="1.2"/></svg>
<svg style="left:661.8px;top:1159px" width="16" height="17" viewBox="0 0 16 17"><circle cx="3.3" cy="3.3" r="2.5" fill="none" stroke="#5f5f5f" stroke-width="1.2"/><circle cx="3.3" cy="13.7" r="2.5" fill="none" stroke="#5f5f5f" stroke-width="1.2"/><circle cx="13" cy="8.5" r="2.5" fill="none" stroke="#5f5f5f" stroke-width="1.2"/><path d="M5.5 4.5 L10.6 7.4 M5.5 12.5 L10.6 9.6" stroke="#5f5f5f" stroke-width="1.2"/></svg>
<svg style="left:700.8px;top:1159px" width="14.5" height="17" viewBox="0 0 14.5 17"><rect x="0.7" y="0.7" width="13" height="6.6" rx="3.3" fill="none" stroke="#5f5f5f" stroke-width="1.2"/><circle cx="4.2" cy="4" r="1.8" fill="#5f5f5f"/><rect x="0.7" y="9.7" width="13" height="6.6" rx="3.3" fill="none" stroke="#5f5f5f" stroke-width="1.2"/><circle cx="10.3" cy="13" r="1.8" fill="#5f5f5f"/></svg>
<svg style="left:738px;top:1159.5px" width="16" height="16" viewBox="0 0 16 16"><path d="M15.3 0.7 L0.8 7.2 L8 8.3 L9 15.3 Z" fill="none" stroke="#5f5f5f" stroke-width="1.3" stroke-linejoin="round"/></svg>
<div class="a" style="left:765.4px;top:1159px;width:1px;height:16px;background:#dcdcdc;"></div>
<svg style="left:775px;top:1157.5px" width="19" height="19" viewBox="0 0 19 19"><rect x="0" y="0" width="19" height="19" rx="4.5" fill="#e4e4e4" stroke="#cfcfcf" stroke-width="0.6"/><path d="M3 6.3 H16 M3 9.5 H16 M3 12.7 H16 M6.3 3 V16 M9.5 3 V16 M12.7 3 V16" stroke="#cdcdcd" stroke-width="0.7"/></svg>
<div class="t" style="left:800.40px;top:1159.27px;font-size:14.8px;color:#333;letter-spacing:-0.377px;">GuardDemo</div>
<svg style="left:1486.6px;top:1159.3px" width="17" height="17" viewBox="0 0 17 17"><rect x="0.7" y="0.7" width="15.6" height="15.6" rx="3" fill="none" stroke="#5f5f5f" stroke-width="1.3"/><rect x="3" y="10.5" width="11" height="3.5" rx="0.8" fill="#5f5f5f"/></svg>
<!-- sec_inspector -->
<div class="a" style="left:1519px;top:96px;width:1px;height:1089px;background:#dcd7d7;"></div>
<div class="a" style="left:1520px;top:97px;width:329px;height:1088px;background:#f3eeee;"></div>
<div class="a" style="left:1520px;top:132px;width:329px;height:1px;background:#dcd7d7;"></div>
<svg style="left:1565px;top:106px" width="13.5" height="16.5" viewBox="0 0 13.5 16.5"><path d="M1.7 0.7 H8 L12.8 5.5 V14.5 Q12.8 15.8 11.5 15.8 H1.7 Q0.7 15.8 0.7 14.5 V2 Q0.7 0.7 1.7 0.7Z M8 0.7 V5.5 H12.8" fill="none" stroke="#6b6b6b" stroke-width="1.2" stroke-linejoin="round"/></svg>
<svg style="left:1600.8px;top:106px" width="16.5" height="16.5" viewBox="0 0 16.5 16.5"><circle cx="8.25" cy="8.25" r="7.5" fill="none" stroke="#6b6b6b" stroke-width="1.2"/><path d="M8.2 3.6 V8.6 H5.4" fill="none" stroke="#6b6b6b" stroke-width="1.2"/></svg>
<svg style="left:1638.7px;top:106px" width="16.5" height="16.5" viewBox="0 0 16.5 16.5"><circle cx="8.25" cy="8.25" r="7.5" fill="none" stroke="#6b6b6b" stroke-width="1.2"/><path d="M5.9 6.3 Q5.9 3.9 8.3 3.9 Q10.6 3.9 10.6 6.1 Q10.6 7.5 8.3 8.6 V10" fill="none" stroke="#6b6b6b" stroke-width="1.2"/><circle cx="8.3" cy="12.3" r="0.8" fill="#6b6b6b"/></svg>
<svg style="left:1676.6px;top:107.4px" width="16.3" height="14.3" viewBox="0 0 16.3 14.3"><rect x="0" y="0" width="16.3" height="14.3" rx="1.5" fill="#0a6cff"/><rect x="2.3" y="2.3" width="6.2" height="6.3" fill="#fff"/><path d="M10 2.8 H14 M10 5.3 H14 M10 7.8 H14 M2.3 11.3 H14" stroke="#fff" stroke-width="1.1"/></svg>
<svg style="left:1714.5px;top:106.5px" width="16.5" height="16" viewBox="0 0 16.5 16"><path d="M0.5 1.8 H16 M0.5 8 H16 M0.5 14.2 H16" stroke="#6b6b6b" stroke-width="1.1"/><circle cx="11.8" cy="1.8" r="1.5" fill="#f3eeee" stroke="#6b6b6b" stroke-width="1.1"/><circle cx="4" cy="8" r="1.5" fill="#f3eeee" stroke="#6b6b6b" stroke-width="1.1"/><circle cx="11.8" cy="14.2" r="1.5" fill="#f3eeee" stroke="#6b6b6b" stroke-width="1.1"/></svg>
<svg style="left:1752px;top:107.3px" width="16" height="15.5" viewBox="0 0 16 15.5"><path d="M0.7 0.8 L15.3 14.7 H0.7 Z" fill="none" stroke="#6b6b6b" stroke-width="1.3" stroke-linejoin="round"/><path d="M3.5 7.5 L8.8 12 H3.5 Z" fill="none" stroke="#6b6b6b" stroke-width="1.1"/></svg>
<svg style="left:1790.6px;top:106.5px" width="16.5" height="16" viewBox="0 0 16.5 16"><path d="M13.6 3.2 A6.9 6.9 0 1 0 13.6 12.8" fill="none" stroke="#6b6b6b" stroke-width="1.2"/><circle cx="8" cy="8" r="2.6" fill="#6b6b6b"/><path d="M8 8 H16.3" stroke="#6b6b6b" stroke-width="1.2"/></svg>
<div class="t" style="left:1529.70px;top:139.88px;font-size:15.5px;color:#7b7b7b;font-weight:700;-webkit-text-stroke:0;letter-spacing:0.031px;">Custom Class</div>
<div class="t" style="left:1588.80px;top:174.85px;font-size:14px;color:#2b2b2b;letter-spacing:-0.752px;">Class</div>
<div class="a" style="left:1628px;top:170.3px;width:212px;height:20.7px;background:#fff;border-radius:4px;box-shadow:0 0 0 0.5px rgba(0,0,0,0.12),0 0.8px 1.2px rgba(0,0,0,0.2)"></div>
<div class="t" style="left:1632.00px;top:173.53px;font-size:14.5px;color:#1e1e1e;letter-spacing:-0.012px;">ErrorLabel</div>
<svg style="left:1802px;top:174.5px" width="12.8" height="12.8" viewBox="0 0 12.8 12.8"><circle cx="6.4" cy="6.4" r="6.4" fill="#8d8d8d"/><path d="M3 6.4 H9.3 M6.9 3.9 L9.4 6.4 L6.9 8.9" fill="none" stroke="#fff" stroke-width="1.3"/></svg>
<svg style="left:1822.6px;top:173px" width="15" height="14.6" viewBox="0 0 15 15.2"><rect x="0" y="0" width="15" height="15.2" rx="3.5" fill="#0a6cff"/><path d="M5.1 6.3 L7.5 8.7 L9.9 6.3" fill="none" stroke="#fff" stroke-width="1.25" stroke-linecap="round" stroke-linejoin="round"/></svg>
<div class="t" style="left:1577.00px;top:203.15px;font-size:14px;color:#2b2b2b;letter-spacing:-0.424px;">Module</div>
<div class="a" style="left:1624.1px;top:193.9px;width:219.5px;height:27.7px;background:#80a9ee;border-radius:7.5px"></div>
<div class="a" style="left:1628px;top:198.2px;width:211.7px;height:19.4px;background:#fff;border-radius:4px"></div>
<div class="t" style="left:1632.00px;top:201.73px;font-size:14.5px;color:#1e1e1e;letter-spacing:-0.450px;">Guard</div>
<div class="a" style="left:1670.8px;top:201.5px;width:1.2px;height:15px;background:#111;"></div>
<svg style="left:1822.6px;top:200.8px" width="15" height="14.6" viewBox="0 0 15 15.2"><rect x="0" y="0" width="15" height="15.2" rx="3.5" fill="#0a6cff"/><path d="M5.1 6.3 L7.5 8.7 L9.9 6.3" fill="none" stroke="#fff" stroke-width="1.25" stroke-linecap="round" stroke-linejoin="round"/></svg>
<div class="a" style="left:1572.1px;top:164.9px;width:274.2px;height:61.9px;background:transparent;border:3.1px solid #fe1f00"></div>
<div class="a" style="left:1626.7px;top:228.3px;width:15px;height:15px;background:#fff;border-radius:3.5px;box-shadow:0 0 0 0.5px rgba(0,0,0,0.14),0 0.6px 1px rgba(0,0,0,0.22)"></div>
<div class="t" style="left:1647.00px;top:228.65px;font-size:14px;color:#2b2b2b;letter-spacing:0.407px;">Inherit Module From Target</div>
<div class="a" style="left:1531px;top:262px;width:308px;height:1px;background:#dedada;"></div>
<div class="t" style="left:1530.00px;top:271.68px;font-size:15.5px;color:#7b7b7b;font-weight:700;-webkit-text-stroke:0;letter-spacing:0.341px;">Identity</div>
<div class="t" style="left:1535.30px;top:307.15px;font-size:14px;color:#2b2b2b;letter-spacing:-0.314px;">Restoration ID</div>
<div class="a" style="left:1627.8px;top:303.7px;width:211.4px;height:20.9px;background:#fff;box-shadow:0 0.6px 1px rgba(0,0,0,0.22);border-radius:1px;"></div>
<div class="a" style="left:1531px;top:340.5px;width:308px;height:1px;background:#dedada;"></div>
<div class="t" style="left:1530.20px;top:349.48px;font-size:15.5px;color:#7b7b7b;font-weight:700;-webkit-text-stroke:0;letter-spacing:0.252px;">User Defined Runtime Attributes</div>
<div class="a" style="left:1531.3px;top:374.8px;width:307.3px;height:121.6px;background:#fff;border:1px solid #c6c6c6"></div>
<div class="a" style="left:1532.3px;top:409.8px;width:305.3px;height:1px;background:#e4e4e4;"></div>
<div class="a" style="left:1698.3px;top:383px;width:1px;height:20px;background:#e0e0e0;"></div>
<div class="a" style="left:1784.5px;top:383px;width:1px;height:20px;background:#e0e0e0;"></div>
<div class="t" style="left:1542.40px;top:386.35px;font-size:14px;color:#2b2b2b;letter-spacing:0.026px;">Key Path</div>
<div class="t" style="left:1703.60px;top:386.35px;font-size:14px;color:#2b2b2b;letter-spacing:0.382px;">Type</div>
<div class="t" style="left:1789.40px;top:386.35px;font-size:14px;color:#2b2b2b;letter-spacing:-0.173px;">Val...</div>
<svg style="left:1538.4px;top:478.5px" width="13" height="13" viewBox="0 0 13 13"><path d="M6.5 0 V13 M0 6.5 H13" stroke="#555" stroke-width="1.3"/></svg>
<svg style="left:1563px;top:484.5px" width="13.4" height="1.5" viewBox="0 0 13.4 1.5"><path d="M0 0.75 H13.4" stroke="#c4c4c4" stroke-width="1.3"/></svg>
<div class="a" style="left:1531px;top:507.3px;width:308px;height:1px;background:#dedada;"></div>
<div class="t" style="left:1530.20px;top:516.88px;font-size:15.5px;color:#7b7b7b;font-weight:700;-webkit-text-stroke:0;letter-spacing:0.102px;">Document</div>
<div class="t" style="left:1588.30px;top:552.15px;font-size:14px;color:#2b2b2b;letter-spacing:-0.439px;">Label</div>
<div class="a" style="left:1628px;top:548.5px;width:211.3px;height:20.5px;background:#fff;box-shadow:0 0.6px 1px rgba(0,0,0,0.22);border-radius:1px;"></div>
<div class="t" style="left:1632.00px;top:551.95px;font-size:14px;color:#c4c4c4;letter-spacing:0.392px;">Xcode Specific Label</div>
<svg style="left:1630.5px;top:581.8px" width="10" height="10" viewBox="0 0 10 10"><path d="M0.8 0.8 L9.2 9.2 M9.2 0.8 L0.8 9.2" stroke="#333" stroke-width="1.4"/></svg>
<div class="a" style="left:1650.6px;top:581.5px;width:10.8px;height:10px;background:#f0867b;border-radius:1.5px;box-shadow:0 0.5px 0.8px rgba(0,0,0,0.18)"></div>
<div class="a" style="left:1673.25px;top:581.5px;width:10.8px;height:10px;background:#f7b46c;border-radius:1.5px;box-shadow:0 0.5px 0.8px rgba(0,0,0,0.18)"></div>
<div class="a" style="left:1695.8999999999999px;top:581.5px;width:10.8px;height:10px;background:#f6d77a;border-radius:1.5px;box-shadow:0 0.5px 0.8px rgba(0,0,0,0.18)"></div>
<div class="a" style="left:1718.55px;top:581.5px;width:10.8px;height:10px;background:#bddf7f;border-radius:1.5px;box-shadow:0 0.5px 0.8px rgba(0,0,0,0.18)"></div>
<div class="a" style="left:1741.1999999999998px;top:581.5px;width:10.8px;height:10px;background:#7eb1f1;border-radius:1.5px;box-shadow:0 0.5px 0.8px rgba(0,0,0,0.18)"></div>
<div class="a" style="left:1763.85px;top:581.5px;width:10.8px;height:10px;background:#d4a7ea;border-radius:1.5px;box-shadow:0 0.5px 0.8px rgba(0,0,0,0.18)"></div>
<div class="a" style="left:1786.5px;top:581.5px;width:10.8px;height:10px;background:#cacaca;border-radius:1.5px;box-shadow:0 0.5px 0.8px rgba(0,0,0,0.18)"></div>
<div class="t" style="left:1562.00px;top:605.15px;font-size:14px;color:#2b2b2b;letter-spacing:0.056px;">Object ID</div>
<div class="t" style="left:1629.30px;top:605.15px;font-size:14px;color:#262626;letter-spacing:0.422px;">SQz-xf-KhB</div>
<div class="t" style="left:1592.30px;top:630.25px;font-size:14px;color:#2b2b2b;letter-spacing:-0.358px;">Lock</div>
<div class="a" style="left:1628px;top:627px;width:211.8px;height:20.4px;background:#fff;border-radius:4px;box-shadow:0 0 0 0.5px rgba(0,0,0,0.12),0 0.8px 1.2px rgba(0,0,0,0.2)"></div>
<div class="t" style="left:1636.00px;top:630.15px;font-size:14px;color:#1e1e1e;letter-spacing:0.525px;">Inherited - (Nothing)</div>
<svg style="left:1822.5px;top:629.6px" width="15" height="15.2" viewBox="0 0 15 15.2"><rect x="0" y="0" width="15" height="15.2" rx="3.5" fill="#0a6cff"/><path d="M4.8 5.8 L7.5 3.4 L10.2 5.8 M4.8 9.4 L7.5 11.8 L10.2 9.4" fill="none" stroke="#fff" stroke-width="1.3" stroke-linecap="round" stroke-linejoin="round"/></svg>
<div class="t" style="left:1538.40px;top:659.55px;font-size:14px;color:#2b2b2b;letter-spacing:-0.186px;">Localizer Hint</div>
<div class="a" style="left:1628px;top:656.2px;width:211.3px;height:20.5px;background:#fff;box-shadow:0 0.6px 1px rgba(0,0,0,0.22);border-radius:1px;"></div>
<div class="t" style="left:1632.00px;top:659.35px;font-size:14px;color:#c4c4c4;letter-spacing:0.325px;">Comment For Localizer</div>
<div class="a" style="left:1531px;top:692.5px;width:308px;height:1px;background:#dedada;"></div>
<div class="t" style="left:1530.20px;top:702.38px;font-size:15.5px;color:#7b7b7b;font-weight:700;-webkit-text-stroke:0;letter-spacing:0.169px;">Accessibility</div>
<div class="t" style="left:1545.60px;top:733.95px;font-size:14px;color:#2b2b2b;letter-spacing:-0.087px;">Accessibility</div>
<svg style="left:1628px;top:733.3px" width="15" height="15" viewBox="0 0 15 15"><rect x="0" y="0" width="15" height="15" rx="3.5" fill="#0a6cff"/><path d="M3.6 7.6 L6.3 10.6 L11.6 3.8" fill="none" stroke="#fff" stroke-width="1.8" stroke-linecap="round" stroke-linejoin="round"/></svg>
<div class="t" style="left:1648.40px;top:733.95px;font-size:14px;color:#2b2b2b;letter-spacing:0.136px;">Enabled</div>
<div class="t" style="left:1588.30px;top:760.55px;font-size:14px;color:#2b2b2b;letter-spacing:-0.439px;">Label</div>
<div class="a" style="left:1628px;top:757.1999999999999px;width:211.3px;height:20.2px;background:#fff;box-shadow:0 0.6px 1px rgba(0,0,0,0.22);border-radius:1px;"></div>
<div class="t" style="left:1632.00px;top:760.25px;font-size:14px;color:#c4c4c4;letter-spacing:0.186px;">Label</div>
<div class="t" style="left:1595.80px;top:789.75px;font-size:14px;color:#2b2b2b;letter-spacing:0.034px;">Hint</div>
<div class="a" style="left:1628px;top:786.4px;width:211.3px;height:20.2px;background:#fff;box-shadow:0 0.6px 1px rgba(0,0,0,0.22);border-radius:1px;"></div>
<div class="t" style="left:1632.00px;top:789.45px;font-size:14px;color:#c4c4c4;letter-spacing:0.534px;">Hint</div>
<div class="t" style="left:1565.80px;top:818.95px;font-size:14px;color:#2b2b2b;letter-spacing:0.145px;">Identifier</div>
<div class="a" style="left:1628px;top:815.5999999999999px;width:211.3px;height:20.2px;background:#fff;box-shadow:0 0.6px 1px rgba(0,0,0,0.22);border-radius:1px;"></div>
<div class="t" style="left:1632.00px;top:818.65px;font-size:14px;color:#c4c4c4;letter-spacing:0.589px;">Identifier</div>
<div class="a" style="left:1531px;top:842px;width:308px;height:1px;background:#dedada;"></div>
<div class="t" style="left:1587.50px;top:850.05px;font-size:14px;color:#2b2b2b;letter-spacing:-0.216px;">Traits</div>
<div class="a" style="left:1628px;top:850.1px;width:15px;height:15px;background:#fff;border-radius:3.5px;box-shadow:0 0 0 0.5px rgba(0,0,0,0.14),0 0.6px 1px rgba(0,0,0,0.22)"></div>
<div class="t" style="left:1648.30px;top:850.05px;font-size:14px;color:#2b2b2b;letter-spacing:0.605px;">Button</div>
<div class="a" style="left:1628px;top:872.84px;width:15px;height:15px;background:#fff;border-radius:3.5px;box-shadow:0 0 0 0.5px rgba(0,0,0,0.14),0 0.6px 1px rgba(0,0,0,0.22)"></div>
<div class="t" style="left:1648.30px;top:872.79px;font-size:14px;color:#2b2b2b;letter-spacing:0.397px;">Image</div>
<svg style="left:1628px;top:895.58px" width="15" height="15" viewBox="0 0 15 15"><rect x="0" y="0" width="15" height="15" rx="3.5" fill="#0a6cff"/><path d="M3.6 7.6 L6.3 10.6 L11.6 3.8" fill="none" stroke="#fff" stroke-width="1.8" stroke-linecap="round" stroke-linejoin="round"/></svg>
<div class="t" style="left:1648.30px;top:895.53px;font-size:14px;color:#2b2b2b;letter-spacing:0.517px;">Static Text</div>
<div class="a" style="left:1628px;top:918.32px;width:15px;height:15px;background:#fff;border-radius:3.5px;box-shadow:0 0 0 0.5px rgba(0,0,0,0.14),0 0.6px 1px rgba(0,0,0,0.22)"></div>
<div class="t" style="left:1648.30px;top:918.27px;font-size:14px;color:#2b2b2b;letter-spacing:0.191px;">Search Field</div>
<div class="a" style="left:1628px;top:941.0600000000001px;width:15px;height:15px;background:#fff;border-radius:3.5px;box-shadow:0 0 0 0.5px rgba(0,0,0,0.14),0 0.6px 1px rgba(0,0,0,0.22)"></div>
<div class="t" style="left:1648.30px;top:941.01px;font-size:14px;color:#2b2b2b;letter-spacing:0.119px;">Plays Sound</div>
<div class="a" style="left:1628px;top:963.8px;width:15px;height:15px;background:#fff;border-radius:3.5px;box-shadow:0 0 0 0.5px rgba(0,0,0,0.14),0 0.6px 1px rgba(0,0,0,0.22)"></div>
<div class="t" style="left:1648.30px;top:963.75px;font-size:14px;color:#2b2b2b;letter-spacing:0.123px;">Keyboard Key</div>
<div class="a" style="left:1628px;top:986.54px;width:15px;height:15px;background:#fff;border-radius:3.5px;box-shadow:0 0 0 0.5px rgba(0,0,0,0.14),0 0.6px 1px rgba(0,0,0,0.22)"></div>
<div class="t" style="left:1648.30px;top:986.49px;font-size:14px;color:#2b2b2b;letter-spacing:0.204px;">Summary Element</div>
<svg style="left:1628px;top:1009.28px" width="15" height="15" viewBox="0 0 15 15"><rect x="0" y="0" width="15" height="15" rx="3.5" fill="#0a6cff"/><path d="M3.6 7.6 L6.3 10.6 L11.6 3.8" fill="none" stroke="#fff" stroke-width="1.8" stroke-linecap="round" stroke-linejoin="round"/></svg>
<div class="t" style="left:1648.30px;top:1009.23px;font-size:14px;color:#2b2b2b;letter-spacing:0.374px;">User Interaction Enabled</div>
<div class="a" style="left:1628px;top:1032.02px;width:15px;height:15px;background:#fff;border-radius:3.5px;box-shadow:0 0 0 0.5px rgba(0,0,0,0.14),0 0.6px 1px rgba(0,0,0,0.22)"></div>
<div class="t" style="left:1648.30px;top:1031.97px;font-size:14px;color:#2b2b2b;letter-spacing:0.419px;">Updates Frequently</div>
<div class="a" style="left:1628px;top:1054.76px;width:15px;height:15px;background:#fff;border-radius:3.5px;box-shadow:0 0 0 0.5px rgba(0,0,0,0.14),0 0.6px 1px rgba(0,0,0,0.22)"></div>
<div class="t" style="left:1648.30px;top:1054.71px;font-size:14px;color:#2b2b2b;letter-spacing:0.327px;">Starts Media Session</div>
<div class="a" style="left:1628px;top:1077.5px;width:15px;height:15px;background:#fff;border-radius:3.5px;box-shadow:0 0 0 0.5px rgba(0,0,0,0.14),0 0.6px 1px rgba(0,0,0,0.22)"></div>
<div class="t" style="left:1648.30px;top:1077.45px;font-size:14px;color:#2b2b2b;letter-spacing:0.347px;">Adjustable</div>
<div class="a" style="left:1628px;top:1100.24px;width:15px;height:15px;background:#fff;border-radius:3.5px;box-shadow:0 0 0 0.5px rgba(0,0,0,0.14),0 0.6px 1px rgba(0,0,0,0.22)"></div>
<div class="t" style="left:1648.30px;top:1100.19px;font-size:14px;color:#2b2b2b;letter-spacing:0.472px;">Allows Direct Interaction</div>
<div class="a" style="left:1628px;top:1122.98px;width:15px;height:15px;background:#fff;border-radius:3.5px;box-shadow:0 0 0 0.5px rgba(0,0,0,0.14),0 0.6px 1px rgba(0,0,0,0.22)"></div>
<div class="t" style="left:1648.30px;top:1122.93px;font-size:14px;color:#2b2b2b;letter-spacing:0.136px;">Causes Page Turn</div>
<div class="a" style="left:1628px;top:1145.72px;width:15px;height:15px;background:#fff;border-radius:3.5px;box-shadow:0 0 0 0.5px rgba(0,0,0,0.14),0 0.6px 1px rgba(0,0,0,0.22)"></div>
<div class="t" style="left:1648.30px;top:1145.67px;font-size:14px;color:#2b2b2b;letter-spacing:0.216px;">Header</div>
<div class="a" style="left:1739.4px;top:850.1px;width:15px;height:15px;background:#fff;border-radius:3.5px;box-shadow:0 0 0 0.5px rgba(0,0,0,0.14),0 0.6px 1px rgba(0,0,0,0.22)"></div>
<div class="t" style="left:1759.40px;top:850.05px;font-size:14px;color:#2b2b2b;letter-spacing:0.439px;">Link</div>
<div class="a" style="left:1739.4px;top:872.76px;width:15px;height:15px;background:#fff;border-radius:3.5px;box-shadow:0 0 0 0.5px rgba(0,0,0,0.14),0 0.6px 1px rgba(0,0,0,0.22)"></div>
<div class="t" style="left:1759.40px;top:872.71px;font-size:14px;color:#2b2b2b;letter-spacing:0.431px;">Selected</div>
<div class="a" style="left:1531px;top:1177px;width:308px;height:1px;background:#dedada;"></div>
<div class="a" style="left:71px;top:48px;width:1778px;height:1137px;border-radius:12px;box-shadow:inset 0 0 0 1px rgba(255,255,255,0.55)"></div>
</div>
</body></html>
